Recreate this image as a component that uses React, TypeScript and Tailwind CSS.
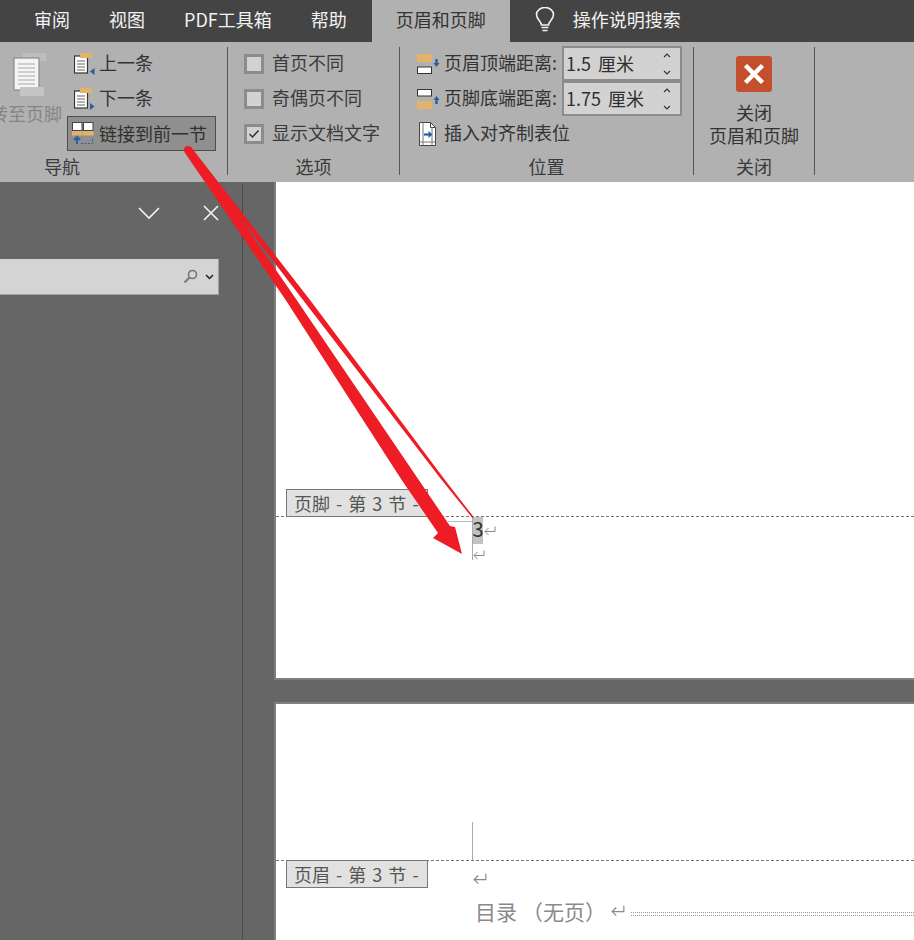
const font = { fontFamily: '"Noto Sans CJK SC", "Noto Sans", sans-serif' };

const tabs = ["审阅", "视图", "PDF工具箱", "帮助"];

function SmallPageIcon({ next }: { next?: boolean }) {
    return (
        <svg width="24" height="26" viewBox="0 0 24 26" className="shrink-0">
            <rect x="0.5" y="5" width="13" height="17" fill="#fff" stroke="#333" strokeWidth="1.2" />
            <rect x="6" y="2" width="12" height="5" fill="#e3b36d" />
            <path d="M3 10h8M3 13h8M3 16h8M3 19h8" stroke="#666" strokeWidth="1" />
            {next ? (
                <path d="M16 17l4.5 3.5-4.5 3.5z" fill="#2b5f9e" />
            ) : (
                <path d="M20.5 17L16 20.5l4.5 3.5z" fill="#2b5f9e" />
            )}
        </svg>
    );
}

function LinkIcon() {
    return (
        <svg width="24" height="26" viewBox="0 0 24 26" className="shrink-0">
            <rect x="0.5" y="1.5" width="9.5" height="8" fill="#fff" stroke="#444" strokeWidth="1" />
            <rect x="11.5" y="1.5" width="9.5" height="8" fill="#fff" stroke="#444" strokeWidth="1" />
            <rect x="0" y="10" width="10.5" height="4.5" fill="#e3b36d" />
            <rect x="11" y="10" width="10.5" height="4.5" fill="#e3b36d" />
            <path d="M5 23v-6M2 19l3-3 3 3" stroke="#2b5f9e" strokeWidth="2" fill="none" />
            <path d="M9 22.5h11.5v-6" stroke="#2b5f9e" strokeWidth="1" strokeDasharray="2 1.5" fill="none" />
        </svg>
    );
}

function MarginIcon({ footer }: { footer?: boolean }) {
    return (
        <svg width="23" height="20" viewBox="0 0 23 20" className="shrink-0" style={footer ? { transform: "scaleY(-1)" } : undefined}>
            <rect x="0" y="0" width="15" height="8" fill="#e3b36d" />
            <path d="M0.5 8v5M14.5 8v5" stroke="#cbb48c" strokeWidth="1" strokeDasharray="1 1" />
            <rect x="0.5" y="13" width="14" height="6.5" fill="#fff" stroke="#333" strokeWidth="1" />
            <path d="M19.5 5v5" stroke="#2b5f9e" strokeWidth="2.4" />
            <path d="M16.5 9l3 4 3-4z" fill="#2b5f9e" />
        </svg>
    );
}

function TabStopIcon() {
    return (
        <svg width="20" height="26" viewBox="0 0 20 26" className="shrink-0">
            <path d="M1.5 1.5h11l5 5v18h-16z" fill="#fff" stroke="#444" strokeWidth="1" />
            <path d="M12.5 1.5v5h5" fill="none" stroke="#444" strokeWidth="1" />
            <path d="M5 1.5v23M14 6.5v18M1.5 21h16" stroke="#777" strokeWidth="1" />
            <path d="M6 13.5h6" stroke="#2b5f9e" strokeWidth="2.2" />
            <path d="M10.5 10l4 3.5-4 3.5z" fill="#2b5f9e" />
        </svg>
    );
}

function Chevron({ up }: { up?: boolean }) {
    return (
        <svg width="8" height="5" viewBox="0 0 8 5">
            <path d={up ? "M1 4l3-3 3 3" : "M1 1l3 3 3-3"} fill="none" stroke="#333" strokeWidth="1.1" />
        </svg>
    );
}

function CheckRow({ label, checked }: { label: string; checked?: boolean }) {
    return (
        <div className="flex h-[35px] items-center gap-2">
            <div className="flex h-5 w-5 items-center justify-center border-[3px] border-[#8c8c8c] bg-[#d2d2d2]">
                {checked && (
                    <svg width="12" height="10" viewBox="0 0 12 10">
                        <path d="M1.5 5l3 3 6-6.5" fill="none" stroke="#333" strokeWidth="1.5" />
                    </svg>
                )}
            </div>
            <span className="mb-[3px] text-[18px] leading-6 text-[#3a3a3a]">{label}</span>
        </div>
    );
}

function SpinBox({ value }: { value: string }) {
    return (
        <div className="flex h-[35px] w-[120px] items-center justify-between border-2 border-[#8c8c8c] bg-[#d2d2d2] pl-[2px] pr-[9px]">
            <span className="mb-[2px] text-[18px] leading-6 text-[#2f2f2f] [word-spacing:3px]">{value}</span>
            <div className="flex flex-col gap-[12px]">
                <Chevron up />
                <Chevron />
            </div>
        </div>
    );
}

function GroupLabel({ children }: { children: string }) {
    return <div className="h-[28px] text-center text-[18px] leading-[25px] text-[#3a3a3a]">{children}</div>;
}

function ReturnMark({ className }: { className?: string }) {
    return (
        <svg width="12" height="10" viewBox="0 0 12 10" className={className}>
            <path d="M11 0.5v5H1M4.5 2L1 5.5 4.5 9" fill="none" stroke="#888" strokeWidth="1" />
        </svg>
    );
}

function SectionTag({ label }: { label: string }) {
    return (
        <div className="ml-[10px] flex h-[28px] w-[142px] shrink-0 items-center whitespace-pre border border-[#777] bg-[#e1e1e1] pl-[7px] text-[18px] leading-6 text-[#555] [word-spacing:2px]">
            {label}
        </div>
    );
}

export default function App() {
    return (
        <div className="relative flex h-[940px] w-[914px] flex-col overflow-hidden bg-[#666]" style={font}>
            {/* Tab strip */}
            <div className="flex h-[42px] items-center bg-[#444] pl-[34px] text-[18px] text-[#f2f2f2]">
                <div className="flex gap-[39px] pb-[4px]">
                    {tabs.map((tab) => (
                        <span key={tab}>{tab}</span>
                    ))}
                </div>
                <div className="ml-[25px] flex h-[42px] w-[138px] items-center justify-center bg-[#b1b1b1] pb-[4px] text-[#333]">页眉和页脚</div>
                <svg width="20" height="25" viewBox="0 0 20 25" className="mb-[3px] ml-[25px]">
                    <path d="M6.5 18c0-3.5-5-5.5-5-10.5a8.5 7 0 0 1 17 0c0 5-5 7-5 10.5z" fill="none" stroke="#f2f2f2" strokeWidth="1.6" />
                    <path d="M6.5 20.5h7M7.5 23.5h5" stroke="#f2f2f2" strokeWidth="1.6" />
                </svg>
                <span className="ml-[18px] pb-[4px]">操作说明搜索</span>
            </div>

            {/* Ribbon */}
            <div className="flex h-[140px] bg-[#b1b1b1]">
                <div className="flex w-[227px] flex-col">
                    <div className="flex h-[112px] pt-[4px]">
                        <div className="flex w-[58px] shrink-0 flex-col items-center">
                            <svg width="36" height="44" viewBox="0 0 36 44" className="ml-[4px] mt-[7px]">
                                <rect x="9" y="0" width="24" height="8" fill="#bdbdbd" />
                                <rect x="1" y="5" width="25" height="32" fill="#f4f4f4" stroke="#8a8a8a" strokeWidth="1.2" />
                                <path d="M5 11h17M5 15h17M5 19h17M5 23h17M5 27h17M5 31h17" stroke="#a8a8a8" strokeWidth="1" />
                                <rect x="7" y="34" width="24" height="9" fill="#c5c5c5" />
                            </svg>
                            <span className="-ml-[6px] mt-[4px] whitespace-nowrap text-[18px] leading-6 text-[#858585]">转至页脚</span>
                        </div>
                        <div className="ml-[9px] flex flex-col">
                            <div className="flex h-[35px] items-center gap-[1px] pl-[7px] text-[18px] text-[#333]">
                                <SmallPageIcon />
                                <span className="mb-[2px]">上一条</span>
                            </div>
                            <div className="flex h-[35px] items-center gap-[1px] pl-[7px] text-[18px] text-[#333]">
                                <SmallPageIcon next />
                                <span className="mb-[2px]">下一条</span>
                            </div>
                            <div className="flex h-[35px] w-[149px] items-center gap-[3px] border border-[#4d4d4d] bg-[#8f8f8f] pl-[4px] text-[18px] text-[#2f2f2f]">
                                <LinkIcon />
                                <span className="mb-[1px]">链接到前一节</span>
                            </div>
                        </div>
                    </div>
                    <div className="w-[124px]">
                        <GroupLabel>导航</GroupLabel>
                    </div>
                </div>

                <div className="mb-[7px] mt-[5px] w-px bg-[#555]" />

                <div className="flex w-[171px] flex-col">
                    <div className="h-[112px] pl-[16px] pt-[4px]">
                        <CheckRow label="首页不同" />
                        <CheckRow label="奇偶页不同" />
                        <CheckRow label="显示文档文字" checked />
                    </div>
                    <GroupLabel>选项</GroupLabel>
                </div>

                <div className="mb-[7px] mt-[5px] w-px bg-[#555]" />

                <div className="flex w-[293px] flex-col">
                    <div className="h-[112px] pl-[17px] pt-[4px] text-[18px] text-[#333]">
                        <div className="flex h-[35px] items-center gap-[4px]">
                            <MarginIcon />
                            <span className="mb-[2px] w-[114px] whitespace-nowrap">页眉顶端距离:</span>
                            <SpinBox value="1.5 厘米" />
                        </div>
                        <div className="flex h-[35px] items-center gap-[4px]">
                            <MarginIcon footer />
                            <span className="mb-[2px] w-[114px] whitespace-nowrap">页脚底端距离:</span>
                            <SpinBox value="1.75 厘米" />
                        </div>
                        <div className="flex h-[35px] items-center gap-[6px] pl-[1px]">
                            <TabStopIcon />
                            <span className="mb-[2px]">插入对齐制表位</span>
                        </div>
                    </div>
                    <GroupLabel>位置</GroupLabel>
                </div>

                <div className="mb-[7px] mt-[5px] w-px bg-[#555]" />

                <div className="flex w-[120px] flex-col">
                    <div className="flex h-[112px] flex-col items-center pt-[14px] text-[18px] leading-[23px] text-[#333]">
                        <div className="mb-[9px] flex h-9 w-9 items-center justify-center rounded-[3px] bg-[#c44f2d]">
                            <svg width="22" height="20" viewBox="0 0 22 20">
                                <path d="M2.5 1.5l17 17M19.5 1.5l-17 17" stroke="#fff" strokeWidth="4.4" />
                            </svg>
                        </div>
                        <span>关闭</span>
                        <span>页眉和页脚</span>
                    </div>
                    <GroupLabel>关闭</GroupLabel>
                </div>

                <div className="mb-[7px] mt-[5px] w-px bg-[#555]" />
            </div>

            {/* Body */}
            <div className="flex min-h-0 flex-1">
                <div className="w-[243px] shrink-0 pt-[2px]">
                    <div className="h-full border-r border-[#4a4a4a]">
                        <div className="mb-[17px] flex h-[58px] items-center justify-end gap-[43px] pr-[23px]">
                            <svg width="22" height="13" viewBox="0 0 22 13">
                                <path d="M1 1l10 10L21 1" fill="none" stroke="#f4f4f4" strokeWidth="1.6" />
                            </svg>
                            <svg width="16" height="16" viewBox="0 0 16 16">
                                <path d="M1 1l14 14M15 1L1 15" stroke="#f4f4f4" strokeWidth="1.6" />
                            </svg>
                        </div>
                        <div className="flex h-[36px] w-[219px] items-center justify-end gap-[7px] border-b border-r border-[#a0a0a0] bg-[#d4d4d4] pr-[4px]">
                            <svg width="15" height="15" viewBox="0 0 15 15">
                                <circle cx="9.5" cy="5.5" r="4" fill="none" stroke="#777" strokeWidth="1.6" />
                                <path d="M6.5 8.5L1.5 13.5" stroke="#777" strokeWidth="2" />
                            </svg>
                            <svg width="9" height="6" viewBox="0 0 9 6">
                                <path d="M1 1l3.5 3.5L8 1" fill="none" stroke="#222" strokeWidth="1.5" />
                            </svg>
                        </div>
                    </div>
                </div>

                <div className="min-w-0 flex-1 pl-[31px]">
                    {/* Page with footer */}
                    <div className="h-[498px] border-b-2 border-l-2 border-[#808080] bg-white pt-[307px]">
                        <SectionTag label="页脚 - 第 3 节 -" />
                        <div className="-mt-px h-px border-t border-dashed border-[#777]" />
                        <div className="flex">
                            <div className="ml-[172px] mt-[4px] h-px w-[24px] bg-[#bbb]" />
                            <div className="h-[43px] border-l border-[#aaa]">
                                <div className="flex h-[27px] items-center">
                                    <span className="flex h-[27px] w-[10px] items-center justify-center bg-[#c2c2c2] pb-[3px] text-[20px] text-[#333]">3</span>
                                    <ReturnMark className="ml-[1px]" />
                                </div>
                                <ReturnMark className="mt-[6px]" />
                            </div>
                        </div>
                    </div>

                    {/* Next page with header */}
                    <div className="mt-[22px] h-[238px] border-l-2 border-t-2 border-[#808080] bg-white pt-[118px]">
                        <div className="ml-[196px] h-[38px] w-px bg-[#aaa]" />
                        <div className="h-px border-t border-dashed border-[#777]" />
                        <div className="-mt-px flex">
                            <SectionTag label="页眉 - 第 3 节 -" />
                            <ReturnMark className="ml-[45px] mt-[13px] h-[12px] w-[14px]" />
                        </div>
                        <div className="ml-[199px] mt-[9px] flex items-center gap-[5px] text-[21px] leading-7 text-[#8a8a8a] [text-spacing-trim:space-all]">
                            <span className="whitespace-nowrap">目录</span>
                            <span className="whitespace-nowrap">（无页）</span>
                            <ReturnMark className="h-[12px] w-[14px]" />
                            <div className="ml-[1px] mt-[6px] h-[4px] min-w-0 flex-1 border-y border-dotted border-[#999]" />
                        </div>
                    </div>
                </div>
            </div>

            {/* Red annotation arrow */}
            <svg width="914" height="940" viewBox="0 0 914 940" className="pointer-events-none absolute left-0 top-0">
                <circle cx="188" cy="150" r="4" fill="#ee1c25" />
                <path d="M185 153L285.7 300 401.7 480 438 533 433 538 462 554 455 527 450 526 296.7 300 191 147z" fill="#ee1c25" />
                <path d="M188 150L303 300 441.7 480 472 517.5 474 517.5 445 480 310 300 191 147z" fill="#ee1c25" />
            </svg>
        </div>
    );
}
